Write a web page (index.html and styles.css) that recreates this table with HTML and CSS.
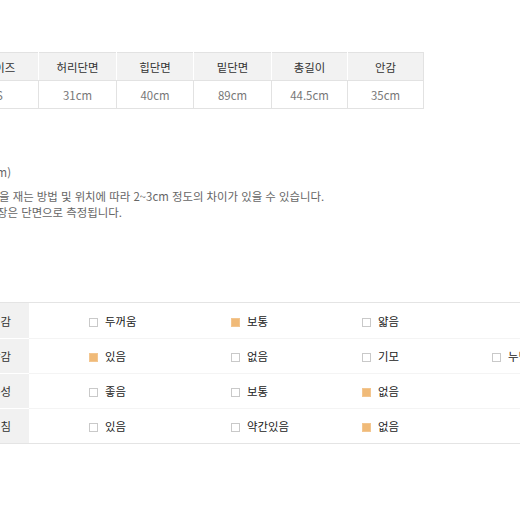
FILE: index.html
```html
<!DOCTYPE html>
<html lang="ko">
<head>
<meta charset="utf-8">
<link rel="stylesheet" href="styles.css">
</head>
<body>
<div class="page">
  <table class="size">
    <colgroup>
      <col class="c1"><col class="c2"><col class="c3"><col class="c4"><col class="c5"><col class="c6">
    </colgroup>
    <tr class="head">
      <th>사이즈</th><th>허리단면</th><th>힙단면</th><th>밑단면</th><th>총길이</th><th>안감</th>
    </tr>
    <tr class="data">
      <td>S</td><td>31cm</td><td>40cm</td><td>89cm</td><td>44.5cm</td><td>35cm</td>
    </tr>
  </table>

  <div class="notes">
    <p class="note unit">(단위 : cm)</p>
    <p class="note n2">을 재는 방법 및 위치에 따라 2~3cm 정도의 차이가 있을 수 있습니다.</p>
    <p class="note n3">장은 단면으로 측정됩니다.</p>
  </div>

  <table class="opts">
    <colgroup>
      <col class="o0"><col class="o1"><col class="o2"><col class="o3"><col class="o4">
    </colgroup>
    <tr>
      <th>두께감</th>
      <td><span class="box"></span>두꺼움</td>
      <td><span class="box on"></span>보통</td>
      <td><span class="box"></span>얇음</td>
      <td></td>
    </tr>
    <tr>
      <th>안감</th>
      <td><span class="box on"></span>있음</td>
      <td><span class="box"></span>없음</td>
      <td><span class="box"></span>기모</td>
      <td><span class="box"></span>누빔</td>
    </tr>
    <tr>
      <th>신축성</th>
      <td><span class="box"></span>좋음</td>
      <td><span class="box"></span>보통</td>
      <td><span class="box on"></span>없음</td>
      <td></td>
    </tr>
    <tr>
      <th>비침</th>
      <td><span class="box"></span>있음</td>
      <td><span class="box"></span>약간있음</td>
      <td><span class="box on"></span>없음</td>
      <td></td>
    </tr>
  </table>
</div>
</body>
</html>
```

FILE: styles.css
```css
html, body {
  margin: 0;
  padding: 0;
  background: #ffffff;
  overflow: hidden;
}

.page {
  width: 520px;
  height: 520px;
  overflow: hidden;
  font-family: "Noto Sans CJK KR", "DejaVu Sans", sans-serif;
  font-size: 11.4px;
  color: #333333;
}

/* size table */
.size {
  border-collapse: collapse;
  table-layout: fixed;
  width: 463px;
  margin: 52px 0 0 -40px;
}
.size .c1 { width: 78px; }
.size .c2 { width: 78px; }
.size .c3 { width: 77px; }
.size .c4 { width: 78px; }
.size .c5 { width: 76px; }
.size .c6 { width: 76px; }

.size th,
.size td {
  height: 27px;
  padding: 0;
  text-align: center;
  border: 1px solid #e2e2e2;
  white-space: nowrap;
}
.size th {
  background: #f2f2f2;
  font-weight: normal;
  color: #333333;
  border-left-color: #ffffff;
  border-right-color: #ffffff;
}
.size td {
  color: #777777;
  background: #ffffff;
}
.size tr > :last-child { border-right-color: #e2e2e2; }

/* notes */
.notes {
  margin-top: 55px;
  color: #666666;
}
.note {
  margin: 0;
  line-height: 16px;
  white-space: nowrap;
}
.unit {
  width: 200px;
  margin-left: -189px;
  text-align: right;
}
.n2 {
  margin-top: 8px;
  margin-left: -1px;
}
.n3 {
  margin-left: -3px;
}

/* option table */
.opts {
  border-collapse: separate;
  border-spacing: 0;
  table-layout: fixed;
  width: 600px;
  margin: 82px 0 0 -51px;
  border-top: 1px solid #e4e4e4;
  border-bottom: 1px solid #e4e4e4;
}
.opts .o0 { width: 80px; }
.opts .o1 { width: 142px; }
.opts .o2 { width: 131px; }
.opts .o3 { width: 130px; }
.opts .o4 { width: 117px; }

.opts th,
.opts td {
  box-sizing: border-box;
  height: 35px;
  padding: 0;
  white-space: nowrap;
  border: none;
}
.opts th {
  background: #f1f1f1;
  font-weight: normal;
  text-align: right;
  padding-right: 18px;
  color: #333333;
}
.opts td {
  padding-left: 60px;
  color: #222222;
}
.opts tr + tr th {
  background: linear-gradient(#ffffff, #ffffff) top / 100% 1px no-repeat, #f1f1f1;
}
.opts tr + tr td {
  background: linear-gradient(#f4f4f4, #f4f4f4) top / 100% 1px no-repeat, #ffffff;
}

.box {
  display: inline-block;
  box-sizing: border-box;
  width: 9px;
  height: 9px;
  border: 1px solid #c9c9c9;
  background: #ffffff;
  margin-right: 7px;
  vertical-align: -1px;
}
.box.on {
  background: #f0ba78;
  border-color: #f3c690;
}
```
